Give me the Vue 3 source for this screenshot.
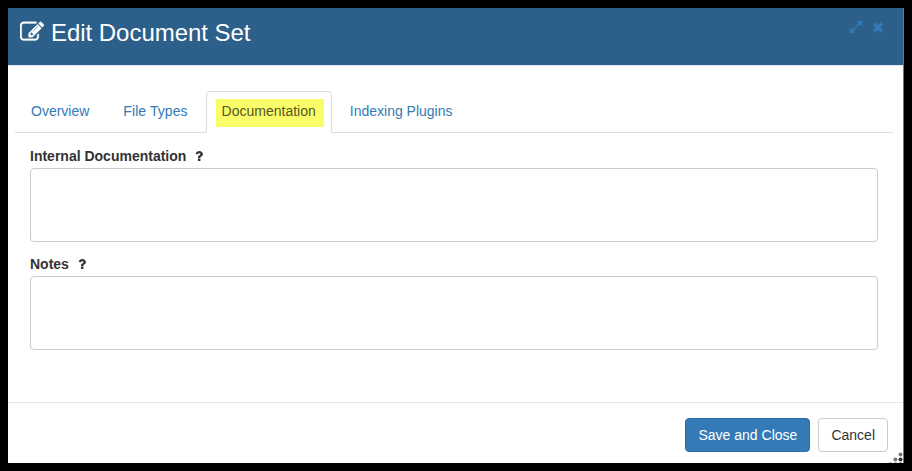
<script setup>
import { ref } from 'vue'

const tabs = ['Overview', 'File Types', 'Documentation', 'Indexing Plugins']
const active = ref('Documentation')
const fields = ref([
  { id: 'internal', label: 'Internal Documentation', value: '' },
  { id: 'notes', label: 'Notes', value: '' },
])
</script>

<template>
  <main class="backdrop">
    <section class="modal">
      <header class="modal-header">
        <svg class="edit-icon" viewBox="0 0 1792 1792"><path d="M888 1184l116-116-152-152-116 116v56h96v96h56zm440-720q-16-16-33 1l-350 350q-17 17-1 33t33-1l350-350q17-17 1-33zm80 594v190q0 119-84.5 203.5t-203.5 84.5h-832q-119 0-203.5-84.5t-84.5-203.5v-832q0-119 84.5-203.5t203.5-84.5h832q63 0 117 25 15 7 18 23 3 17-9 29l-49 49q-14 14-32 8-23-6-45-6h-832q-66 0-113 47t-47 113v832q0 66 47 113t113 47h832q66 0 113-47t47-113v-126q0-13 9-22l64-64q15-15 35-7t20 29zm-96-738l288 288-672 672h-288v-288zm444 132l-92 92-288-288 92-92q28-28 68-28t68 28l152 152q28 28 28 68t-28 68z" /></svg>
        <h1>Edit Document Set</h1>
        <div class="tools">
          <svg viewBox="0 0 1792 1792"><path d="M883 1056q0 13-10 23l-332 332 144 144q19 19 19 45t-19 45-45 19h-448q-26 0-45-19t-19-45v-448q0-26 19-45t45-19 45 19l144 144 332-332q10-10 23-10t23 10l114 114q10 10 10 23zm781-864v448q0 26-19 45t-45 19-45-19l-144-144-332 332q-10 10-23 10t-23-10l-114-114q-10-10-10-23t10-23l332-332-144-144q-19-19-19-45t19-45 45-19h448q26 0 45 19t19 45z" /></svg>
          <svg viewBox="0 0 1792 1792"><path d="M1490 1322q0 40-28 68l-136 136q-28 28-68 28t-68-28l-294-294-294 294q-28 28-68 28t-68-28l-136-136q-28-28-28-68t28-68l294-294-294-294q-28-28-28-68t28-68l136-136q28-28 68-28t68 28l294 294 294-294q28-28 68-28t68 28l136 136q28 28 28 68t-28 68l-294 294 294 294q28 28 28 68z" /></svg>
        </div>
      </header>

      <div class="modal-body">
        <nav class="tabs">
          <a v-for="tab in tabs" :key="tab" class="tab" :class="{ active: tab === active }" @click="active = tab">
            <span>{{ tab }}</span>
          </a>
        </nav>
        <div class="pane">
          <div v-for="field in fields" :key="field.id" class="field">
            <label :for="field.id">
              {{ field.label }}
              <svg class="help" viewBox="400 256 1004 1280"><path d="M1088 1256v240q0 16-12 28t-28 12h-240q-16 0-28-12t-12-28v-240q0-16 12-28t28-12h240q16 0 28 12t12 28zm316-600q0 54-15.5 101t-35 76.5-55 59.5-57.5 43.5-61 35.5q-41 23-68.5 65t-27.5 67q0 17-12 32.5t-28 15.5h-240q-15 0-25.5-18.5t-10.5-37.5v-45q0-83 65-156.5t143-108.5q59-27 84-56t25-76q0-42-46.5-74t-107.5-32q-65 0-108 29-35 25-107 115-13 16-31 16-12 0-25-8l-164-125q-13-10-15.5-25t5.5-28q160-266 464-266 80 0 161 31t146 83 106 127.5 41 158.5z" /></svg>
            </label>
            <textarea :id="field.id" v-model="field.value"></textarea>
          </div>
        </div>
      </div>

      <footer class="modal-footer">
        <button class="btn primary">Save and Close</button>
        <button class="btn">Cancel</button>
      </footer>
      <svg class="grip" viewBox="0 0 16 12">
        <circle cx="13.5" cy="3.4" r="2" fill="#777" />
        <circle cx="8.4" cy="8.4" r="2" fill="#777" />
        <circle cx="13.5" cy="8.4" r="2" fill="#333" />
        <rect x="2.5" y="11" width="2" height="1" fill="#999" />
        <rect x="7.5" y="11" width="2" height="1" fill="#aaa" />
        <rect x="12.5" y="11" width="2" height="1" fill="#888" />
      </svg>
    </section>
  </main>
</template>

<style>
body {
  margin: 0;
  background: #000;
}
</style>

<style scoped>
.backdrop {
  box-sizing: border-box;
  height: 471px;
  padding: 8px;
  background: #000;
  color: #333;
  font: 14px/20px "Liberation Sans", Arial, sans-serif;
}
.modal {
  position: relative;
  box-sizing: border-box;
  display: flex;
  flex-direction: column;
  width: 896px;
  height: 455px;
  border-right: 1px solid #777;
  background: #fff;
}
.modal-header {
  box-sizing: border-box;
  display: flex;
  align-items: flex-start;
  height: 58px;
  padding: 12px 18px 0 12px;
  border-bottom: 1px solid #e5eaf0;
  background: #2c5f8a;
  color: #fff;
}
svg {
  display: block;
  fill: currentColor;
}
.edit-icon {
  width: 24px;
  height: 24px;
}
.edit-icon path {
  stroke: currentColor;
  stroke-width: 25;
}
h1 {
  flex: 1;
  margin: 0 0 0 7px;
  font-size: 24px;
  font-weight: 400;
  line-height: 26px;
  letter-spacing: -0.04px;
}
.tools {
  display: flex;
  gap: 8px;
  color: #337ab7;
}
.tools svg {
  width: 14px;
  height: 14px;
}
.tools path {
  stroke: currentColor;
  stroke-width: 60;
}
.modal-body {
  flex: 1;
  padding: 25px 10px 0 7px;
}
.tabs {
  display: flex;
  height: 42px;
  box-sizing: border-box;
  border-bottom: 1px solid #ddd;
}
.tab {
  box-sizing: border-box;
  height: 42px;
  margin-right: 2px;
  padding: 9px 15px 11px;
  border: 1px solid transparent;
  border-radius: 4px 4px 0 0;
  color: #337ab7;
  cursor: pointer;
}
.tab:nth-child(2) {
  letter-spacing: 0.07px;
}
.tab.active {
  padding: 7px 7px 5px 9px;
  border-color: #ddd;
  border-bottom-color: #fff;
  background: #fff;
  color: #555522;
}
.tab.active span {
  display: block;
  padding: 2px 8px 6px 6px;
  background: #f9fd69;
}
.pane {
  padding: 14px 15px 0;
}
.field {
  margin-bottom: 13px;
}
label {
  box-sizing: border-box;
  display: flex;
  align-items: center;
  gap: 9px;
  height: 21px;
  padding-bottom: 4px;
  font-weight: 700;
}
.help {
  width: 8px;
  height: 10px;
}
textarea {
  display: block;
  box-sizing: border-box;
  width: 100%;
  height: 74px;
  border: 1px solid #ccc;
  border-radius: 4px;
  resize: none;
}
.modal-footer {
  box-sizing: border-box;
  display: flex;
  justify-content: flex-end;
  gap: 8px;
  height: 61px;
  padding: 15px;
  border-top: 1px solid #e5e5e5;
}
.btn {
  height: 34px;
  padding: 6px 12px;
  border: 1px solid #ccc;
  border-radius: 4px;
  background: #fff;
  color: #333;
  font: inherit;
}
.primary {
  width: 125px;
  border-color: #2e6da4;
  background: #337ab7;
  color: #fff;
}
.grip {
  position: absolute;
  right: 0;
  bottom: 0;
  width: 16px;
  height: 12px;
}
</style>
